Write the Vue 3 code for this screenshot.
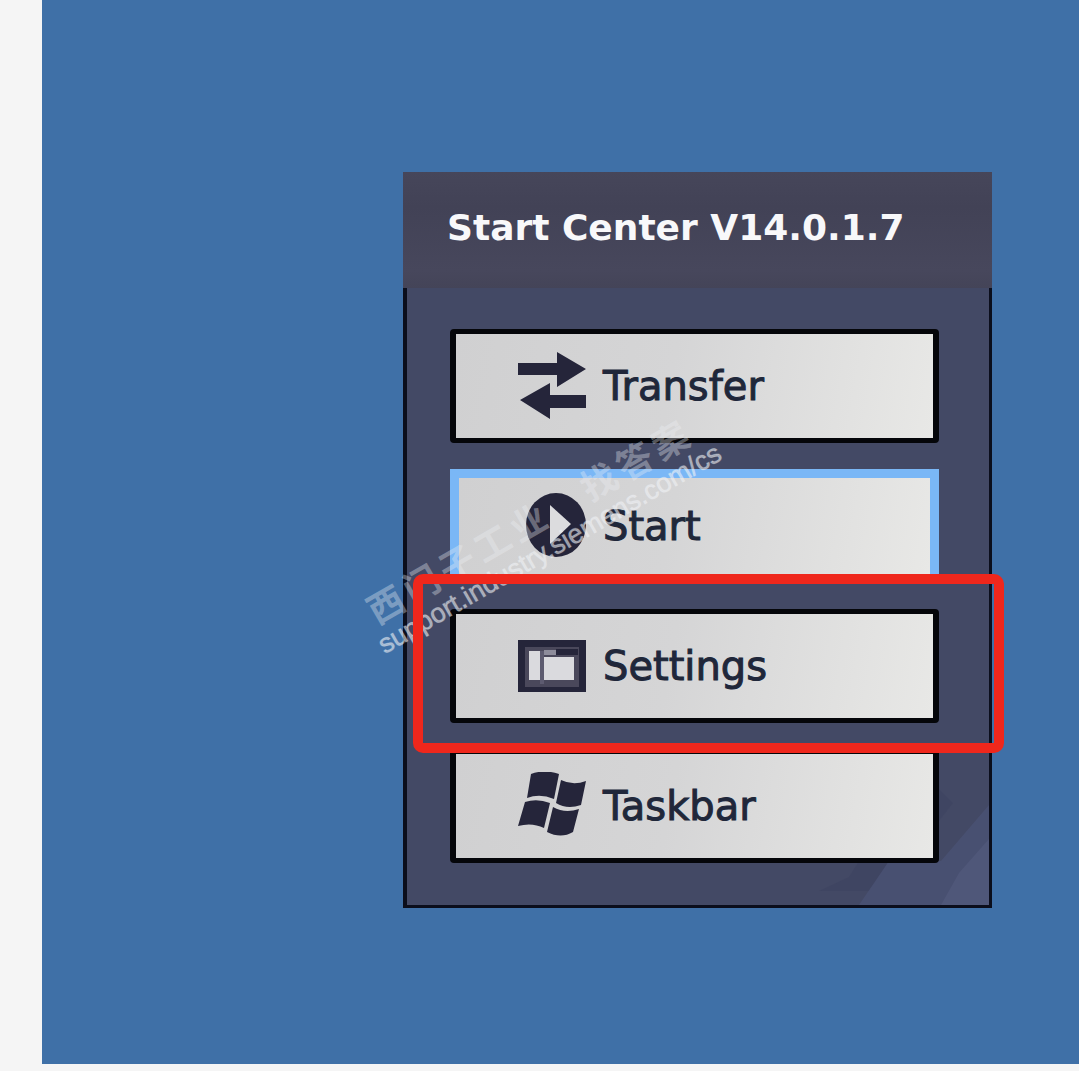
<template>
  <div class="page">
    <main class="desktop">
      <section class="start-center">
        <header class="title-bar">
          <h1>Start Center V14.0.1.7</h1>
        </header>
        <div class="panel-body">
          <svg class="panel-shade" viewBox="0 0 190 150" aria-hidden="true">
            <path d="M20 136 L50 122 L60 106 L140 60 V34 L154 48 L140 66 V106 H90 L70 136Z" fill="#3c4260" opacity="0.5" />
            <path d="M60 150 L90 106 L142 106 L190 50 V150Z" fill="#4c5579" opacity="0.6" />
            <path d="M142 150 L160 118 L190 84 V150Z" fill="#555b7e" opacity="0.6" />
          </svg>
          <ul class="menu">
            <li v-for="item in items" :key="item.id" class="menu-item">
              <button
                type="button"
                class="menu-button"
                :class="{ focused: item.id === focusedId }"
                @click="focusedId = item.id"
              >
                <svg v-if="item.id === 'transfer'" class="icon" viewBox="0 0 68 68" aria-hidden="true">
                  <path d="M0 11 H39 V0 L68 17 L39 35 V23 H0Z" />
                  <path d="M68 43 H32 V31 L2 48 L32 67 V56 H68Z" />
                </svg>
                <svg v-else-if="item.id === 'start'" class="icon" viewBox="0 0 68 68" aria-hidden="true">
                  <ellipse cx="38" cy="33" rx="30" ry="32" />
                  <path d="M32 13 L53 32 L32 52Z" fill="#dcdcde" />
                </svg>
                <svg v-else-if="item.id === 'settings'" class="icon" viewBox="0 0 68 68" aria-hidden="true">
                  <rect x="0" y="8" width="68" height="52" />
                  <rect x="7" y="15" width="54" height="40" fill="#4a485b" />
                  <rect x="11" y="19" width="11" height="29" fill="#dadade" />
                  <rect x="22" y="19" width="4" height="33" fill="#5d5b70" />
                  <rect x="26" y="18" width="12" height="5" fill="#8d8c9b" />
                  <rect x="38" y="17" width="22" height="6" />
                  <rect x="26" y="25" width="30" height="23" fill="#dadade" />
                </svg>
                <svg v-else class="icon" viewBox="0 0 68 68" aria-hidden="true">
                  <path d="M13 2 Q26 -3 41 2 L36 27 Q22 21 9 26Z" />
                  <path d="M43 8 Q55 14 68 9 L63 33 Q49 38 38 31Z" />
                  <path d="M7 30 Q19 26 32 31 L26 56 Q14 50 0 54Z" />
                  <path d="M35 35 Q47 42 61 37 L55 60 Q43 67 29 60Z" />
                </svg>
                <span>{{ item.label }}</span>
              </button>
              <span v-if="item.id === markedId" class="marker"></span>
            </li>
          </ul>
        </div>
        <div class="watermark">
          <div class="watermark-name">
            <span v-for="(char, i) in siteName" :key="i">{{ char }}</span>
          </div>
          <div class="watermark-site">support.industry.siemens.com/cs</div>
        </div>
      </section>
    </main>
  </div>
</template>

<script setup>
import { ref } from 'vue'

const items = [
  { id: 'transfer', label: 'Transfer' },
  { id: 'start', label: 'Start' },
  { id: 'settings', label: 'Settings' },
  { id: 'taskbar', label: 'Taskbar' }
]

const siteName = [...'西门子工业　找答案']

const focusedId = ref('start')
const markedId = 'settings'
</script>

<style>
body {
  margin: 0;
  background: #f5f5f5;
}
</style>

<style scoped>
.page {
  box-sizing: border-box;
  min-height: 100vh;
  padding: 0 0 7px 42px;
  display: flex;
  overflow: hidden;
  font-family: "DejaVu Sans", Verdana, sans-serif;
}

.desktop {
  flex: 1;
  box-sizing: border-box;
  padding: 172px 87px 0 361px;
  background: #3f70a7;
}

.start-center {
  position: relative;
}

.title-bar {
  box-sizing: border-box;
  display: flex;
  align-items: center;
  height: 116px;
  padding: 0 0 4px 44px;
  background: linear-gradient(#46465a, #424256 30%, #47475c 85%, #444458);
}

.title-bar h1 {
  margin: 0;
  font-size: 36px;
  line-height: 42px;
  font-weight: bold;
  color: #f8f8fa;
  white-space: nowrap;
}

.panel-body {
  position: relative;
  padding: 41px 50px 42px 43px;
  border: solid #0b0e1c;
  border-width: 0 3px 3px 4px;
  background: #434965;
}

.panel-shade {
  position: absolute;
  right: 0;
  bottom: 0;
  width: 190px;
  height: 150px;
}

.menu {
  position: relative;
  display: flex;
  flex-direction: column;
  gap: 26px;
  margin: 0;
  padding: 0;
  list-style: none;
}

.menu-item {
  position: relative;
}

.menu-button {
  box-sizing: border-box;
  display: flex;
  align-items: center;
  gap: 17px;
  width: 100%;
  height: 114px;
  padding: 0 0 0 62px;
  border: solid #05060a;
  border-width: 5px 6px;
  border-radius: 4px;
  background: linear-gradient(100deg, #d0d0d1, #d5d5d6 45%, #e8e8e6);
  color: #20273a;
  font-family: inherit;
  font-size: 40px;
  line-height: 46px;
  text-align: left;
  -webkit-text-stroke: 1px #20273a;
  cursor: pointer;
}

.menu-button.focused {
  padding-left: 59px;
  border: 9px solid #7ab7f6;
  border-radius: 0;
  outline: none;
}

.icon {
  flex: none;
  width: 68px;
  height: 68px;
  fill: #25253a;
}

/* red frame around the highlighted entry */
.marker {
  position: absolute;
  z-index: 3;
  top: -35px;
  right: -65px;
  bottom: -30px;
  left: -37px;
  border: 10px solid #ef271c;
  border-radius: 10px;
  pointer-events: none;
}

.watermark {
  position: absolute;
  z-index: 2;
  top: 322px;
  left: -60px;
  width: 390px;
  transform: rotate(-30deg);
  white-space: nowrap;
  pointer-events: none;
}

.watermark-name {
  display: flex;
  gap: 5px;
  padding-left: 8px;
  font-family: "Noto Sans CJK SC", sans-serif;
  font-size: 36px;
  font-weight: bold;
  line-height: 44px;
  color: rgba(238, 240, 244, 0.36);
}

.watermark-site {
  font-family: "Liberation Sans", Arial, sans-serif;
  font-size: 27px;
  line-height: 28px;
  color: rgba(240, 242, 245, 0.58);
  -webkit-text-stroke: 1px rgba(240, 242, 245, 0.3);
}
</style>
